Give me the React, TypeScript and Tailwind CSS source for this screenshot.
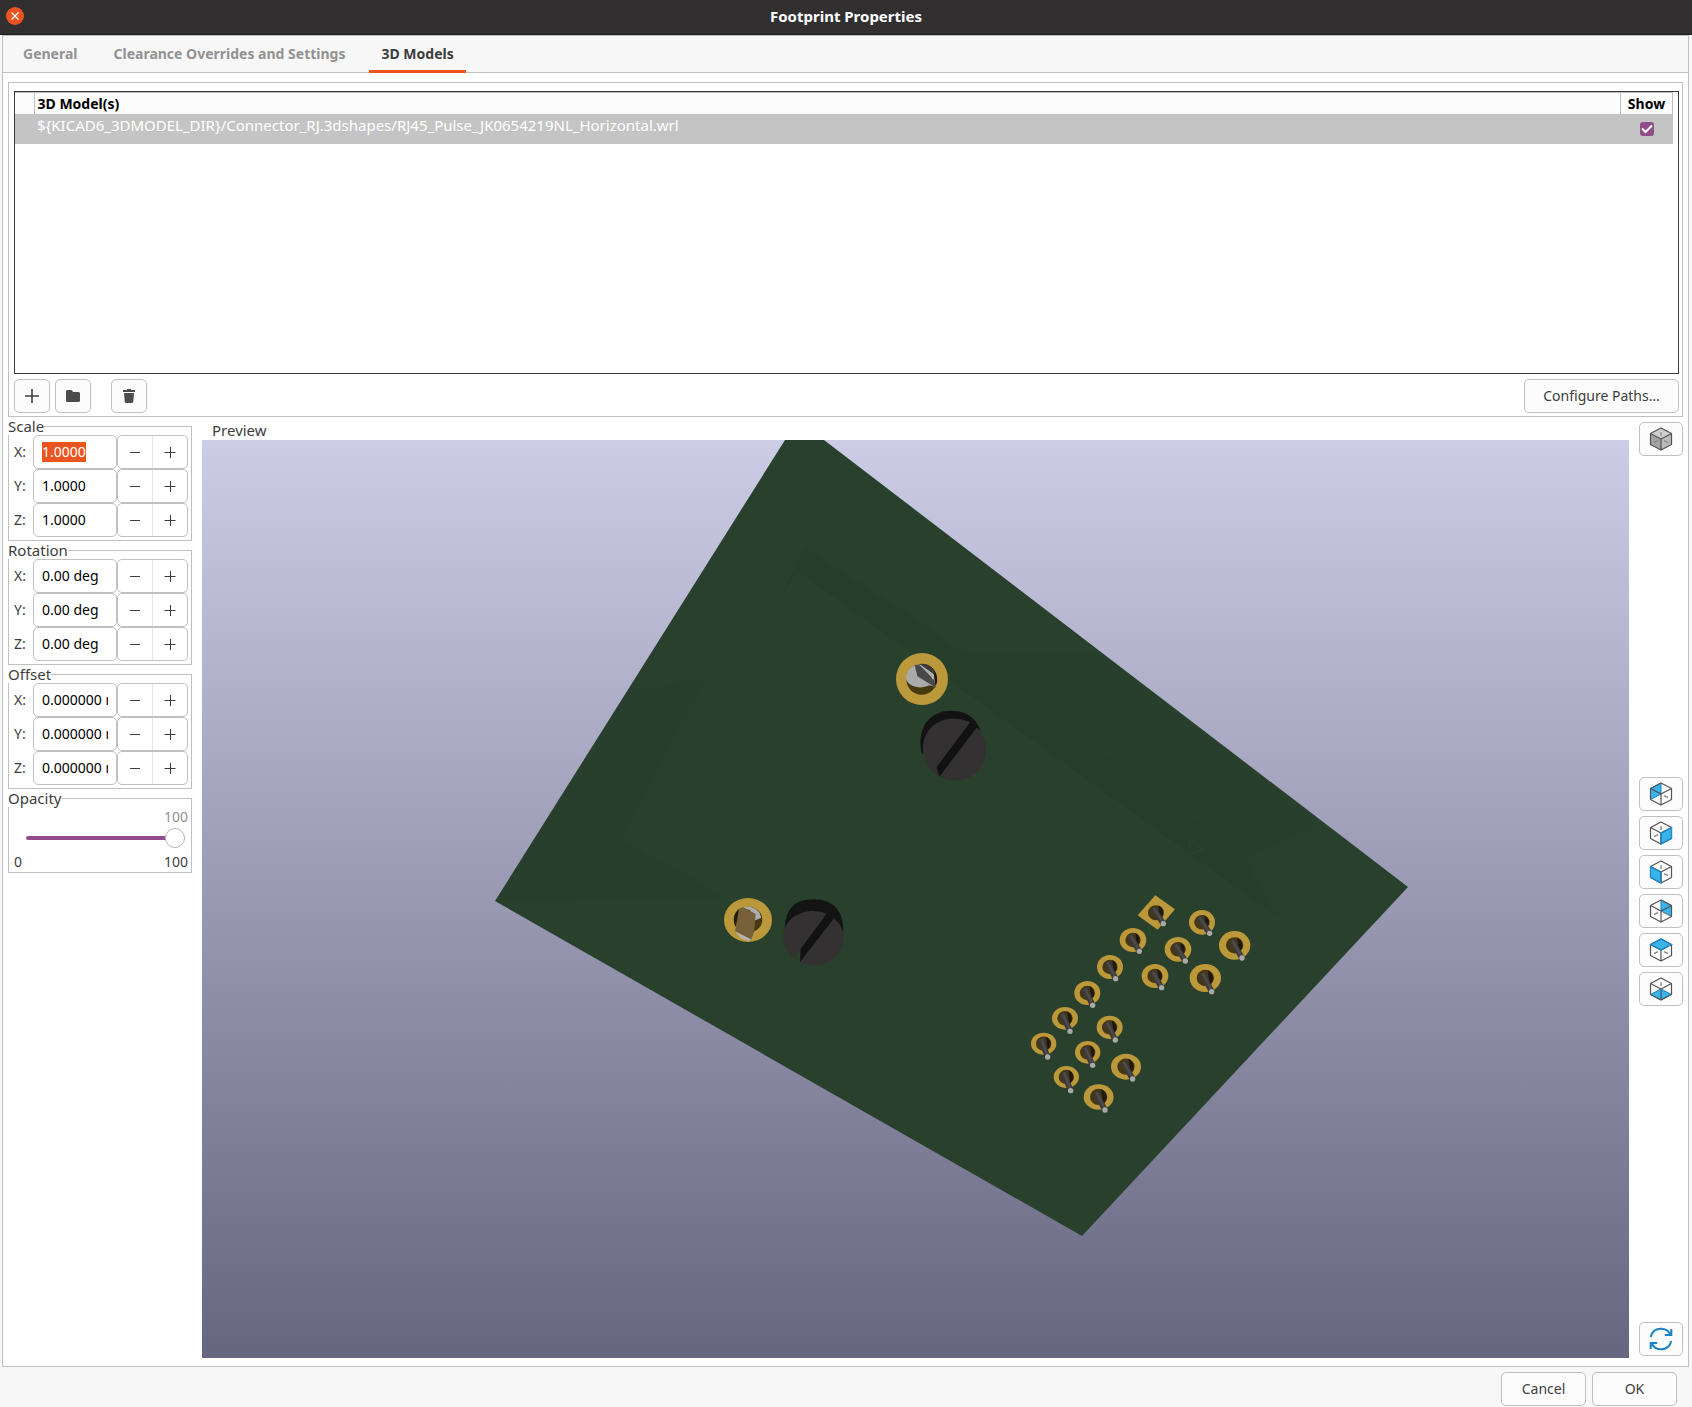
import React, { useEffect, useRef } from "react";

const BUTTON =
  "flex items-center justify-center rounded-[5px] border border-[#c0c0c0] bg-[#fcfcfc] text-[#3d3d3d]";

type CubeFace = "backLeft" | "right" | "left" | "backRight" | "top" | "bottom";

const FACES: Record<CubeFace, string> = {
  backLeft: "12,1 1.5,6.5 1.5,17.5 12,12",
  right: "12,12 22.5,6.5 22.5,17.5 12,23",
  left: "1.5,6.5 12,12 12,23 1.5,17.5",
  backRight: "12,1 22.5,6.5 22.5,17.5 12,12",
  top: "12,1 22.5,6.5 12,12 1.5,6.5",
  bottom: "12,12 22.5,17.5 12,23 1.5,17.5",
};

const VIEWS: { face: CubeFace; label: string }[] = [
  { face: "backLeft", label: "View left" },
  { face: "right", label: "View right" },
  { face: "left", label: "View front" },
  { face: "backRight", label: "View back" },
  { face: "top", label: "View top" },
  { face: "bottom", label: "View bottom" },
];

const CubeIcon = ({ face }: { face?: CubeFace }) => {
  const inFront = face === "left" || face === "right" || face === "top";

  return (
    <svg width="24" height="24" viewBox="0 0 24 24" fill="none">
      {!face && (
        <>
          <polygon points={FACES.top} fill="#d0d0d0" />
          <polygon points={FACES.left} fill="#a3a3a3" />
          <polygon points={FACES.right} fill="#bababa" />
        </>
      )}
      {face && <polygon points={FACES[face]} fill="#39b4ea" stroke="#1a81c4" />}
      <g stroke={face ? "#848484" : "#8c8c8c"} strokeWidth="1.3">
        {face !== "top" && face !== "backLeft" && face !== "backRight" && <path d="M12 5v4" />}
        {face !== "left" && face !== "backLeft" && face !== "bottom" && (
          <path d="M5 15.700l4-2.100" />
        )}
        {face !== "right" && face !== "bottom" && <path d="M19 15.700l-4-2.100" />}
      </g>
      <path
        d="M12 1l10.500 5.500v11L12 23 1.500 17.500v-11zM1.500 6.500L12 12l10.500-5.500M12 12v11"
        stroke="#545454"
        strokeWidth="1.2"
        strokeLinejoin="round"
      />
      {face && inFront && <polygon points={FACES[face]} stroke="#1f8fd0" strokeWidth="1.2" />}
    </svg>
  );
};

const StepIcon = ({ plus }: { plus?: boolean }) => (
  <svg width="12" height="12" viewBox="0 0 12 12" stroke="#3d3d3d" strokeWidth="1">
    <path d={plus ? "M.5 6.500h11M6.500 1v11" : "M1 6.500h10"} />
  </svg>
);

type AxisGroupProps = {
  title: string;
  value: string;
  focusFirst?: boolean;
};

const AxisGroup = ({ title, value, focusFirst }: AxisGroupProps) => {
  const first = useRef<HTMLInputElement>(null);

  useEffect(() => {
    if (focusFirst) {
      first.current?.focus();
      first.current?.select();
    }
  }, [focusFirst]);

  return (
    <fieldset className="border border-[#c0c0c0] pb-[3px]">
      <legend className="-ml-px text-[15px] leading-[18px]">{title}</legend>
      {["X", "Y", "Z"].map((axis, i) => {
        const id = `${title}-${axis}`;
        return (
          <div key={axis} className="flex h-[34px] items-stretch pr-[3px] pl-[5px]">
            <label htmlFor={id} className="flex w-[19px] items-center">
              {axis}:
            </label>
            <input
              id={id}
              ref={i === 0 ? first : undefined}
              defaultValue={value}
              className="w-[84px] rounded-[5px] border border-[#c0c0c0] bg-white px-2 text-black outline-none selection:bg-[#e95420] selection:text-white"
            />
            <div className="flex flex-1 rounded-[5px] border border-[#c0c0c0]">
              <button
                aria-label={`Decrease ${title} ${axis}`}
                className="flex flex-1 items-center justify-center border-r border-[#e4e4e4]"
              >
                <StepIcon />
              </button>
              <button
                aria-label={`Increase ${title} ${axis}`}
                className="flex flex-1 items-center justify-center"
              >
                <StepIcon plus />
              </button>
            </div>
          </div>
        );
      })}
    </fieldset>
  );
};

const OpacityGroup = () => (
  <fieldset className="border border-[#c0c0c0]">
    <legend className="-ml-px text-[15px] leading-[18px]">
      <label htmlFor="opacity">Opacity</label>
    </legend>
    <div className="flex h-[65px] flex-col pr-[3px] pl-[5px]">
      <output htmlFor="opacity" className="h-5 text-right leading-5 text-[#929292]">
        100
      </output>
      <input
        id="opacity"
        type="range"
        min="0"
        max="100"
        defaultValue="100"
        className="mr-[3px] ml-3 h-[22px] appearance-none bg-transparent [&::-webkit-slider-runnable-track]:h-1 [&::-webkit-slider-runnable-track]:rounded-full [&::-webkit-slider-runnable-track]:bg-[#924d8b] [&::-webkit-slider-thumb]:-mt-2 [&::-webkit-slider-thumb]:size-5 [&::-webkit-slider-thumb]:appearance-none [&::-webkit-slider-thumb]:rounded-full [&::-webkit-slider-thumb]:border [&::-webkit-slider-thumb]:border-[#b5b5b5] [&::-webkit-slider-thumb]:bg-white"
      />
      <div className="flex justify-between pt-1">
        <span>0</span>
        <span>100</span>
      </div>
    </div>
  </fieldset>
);

// cx, cy, rx, ry of the pad, then the tip of the pin
const PADS = [
  [576, 127, 39, 37, 599, 160],
  [674, 196, 47, 43, 696, 234],
  [369, 180, 40, 36, 388, 214],
  [504, 208, 40, 37, 526, 243],
  [300, 261, 39, 36, 317, 296],
  [435, 288, 40, 36, 455, 323],
  [586, 294, 47, 42, 605, 335],
  [232, 339, 39, 36, 248, 376],
  [165, 415, 39, 34, 180, 454],
  [299, 442, 39, 35, 316, 480],
  [101, 491, 38, 33, 113, 531],
  [233, 517, 38, 34, 248, 556],
  [348, 560, 45, 39, 368, 597],
  [169, 591, 38, 33, 182, 632],
  [266, 651, 45, 38, 285, 690],
];

type PinProps = { cx: number; cy: number; r: number; tx: number; ty: number };

const Pin = ({ cx, cy, r, tx, ty }: PinProps) => (
  <>
    <ellipse cx={cx} cy={cy} rx={r} ry={r * 0.94} fill="#463714" />
    <path
      d={`M${cx + r * 0.3} ${cy - r * 0.9}A${r} ${r} 0 0 1 ${cx + r * 0.5} ${cy + r * 0.8}z`}
      fill="#1f190c"
    />
    <path d={`M${cx - 9} ${cy - 14}L${tx} ${ty}`} stroke="#3c3a3a" strokeWidth="17" />
    <path d={`M${cx - 7} ${cy - 14}L${tx + 1} ${ty}`} stroke="#4d4b4b" strokeWidth="7" />
    <circle cx={tx} cy={ty} r="8" fill="#aaa9a9" />
  </>
);

const BoardPreview = () => (
  <svg
    className="absolute inset-0 size-full"
    viewBox="202 440 1427 918"
    preserveAspectRatio="xMidYMid slice"
    role="img"
    aria-label="3D preview of the board"
  >
    <polygon points="785,440 824,440 1408,887 1082,1236 495,901" fill="#29412c" />
    <path
      d="M940 653H1098L1320 824 1240 860zM628 692L705 678 622 838 725 899 498 900z"
      fill="#293f2f"
      opacity="0.7"
    />
    <path
      d="M805 548L916 619 1244 855 1277 918 798 573 778 600z"
      fill="#273e2a"
      opacity="0.8"
    />
    <path d="M798 573L1277 918 1130 1085 624 839z" fill="none" stroke="#2c4430" strokeWidth="1" />
    <path d="M1189 839l14 10-12 5z" fill="none" stroke="#2c4430" />

    {/* mounting posts */}
    <g transform="translate(880 630) scale(.3333)">
      <circle cx="126" cy="147" r="78" fill="#bb993a" />
      <circle cx="125" cy="148" r="46" fill="#46380f" />
      <path d="M125 102A46 46 0 0 1 168 166L140 130z" fill="#1d180c" />
      <path d="M106 105C84 114 75 135 79 151C90 171 120 179 148 166L166 170 160 120 125 102z" fill="#aaaaaa" />
      <path d="M104 105L112 139 168 173 162 150 120 106z" fill="#484848" />
      <path d="M116 102Q150 96 164 126L162 134z" fill="#3b3b3b" />
      <path d="M120 105L158 132v15" fill="none" stroke="#c2c2c2" strokeWidth="3" />
      <path d="M126 372C118 340 120 310 134 284C155 251 190 238 225 243C265 245 288 268 300 298L280 330z" fill="#131313" />
      <path d="M222 266A93 93 0 1 1 178 439L160 428C132 400 124 363 131 334C140 294 178 264 222 266z" fill="#343132" />
      <path d="M271 276L170 411 178 440 291 292 285 272z" fill="#111111" />
    </g>
    <g transform="translate(700 870) scale(.3333)">
      <ellipse cx="144" cy="150" rx="72" ry="66" fill="#bb993a" />
      <ellipse cx="144" cy="149" rx="43" ry="39" fill="#463710" />
      <path d="M102 151Q102 124 122 114L112 175Q102 165 102 151z" fill="#241c0a" />
      <path d="M119 115Q154 102 178 127L184 143 163 152 150 120z" fill="#aeacac" />
      <path d="M117 118L129 111 167 132 163 184 153 211 139 211 105 184z" fill="#756039" />
      <path d="M105 184L153 208 148 214 125 206z" fill="#b6b3b1" />
      <path d="M254 200C250 120 280 88 341 88C400 88 435 123 429 195z" fill="#141414" />
      <path d="M380 131L400 145C424 161 432 187 431 205C428 254 393 286 343 286Q318 286 300 276L282 263C258 244 250 222 250 200C250 155 290 123 341 123Q362 123 380 131z" fill="#343132" />
      <path d="M380 131L300 239V276L401 146z" fill="#111111" />
      <path d="M282 263L302 236 300 276z" fill="#29412c" />
    </g>

    {/* signal pins */}
    <g transform="translate(1010 880) scale(.3333)">
      <polygon points="436,46 495,88 443,149 383,106" fill="#bb993a" />
      <Pin cx={438} cy={98} r={24} tx={460} ty={131} />
      {PADS.map(([cx, cy, rx, ry, tx, ty]) => (
        <g key={`${cx}-${cy}`}>
          <ellipse cx={cx} cy={cy} rx={rx} ry={ry} fill="#bb993a" />
          <Pin cx={cx} cy={cy} r={rx > 42 ? 26 : 23} tx={tx} ty={ty} />
        </g>
      ))}
    </g>
  </svg>
);

const ModelTable = () => (
  <div className="h-[283px] border border-[#3a3a3a] bg-white pr-[5px]">
    <table className="w-full table-fixed border-collapse text-left">
      <thead>
        <tr className="h-[21px] border-t border-[#c0c0c0] bg-[#fcfcfc] leading-[18px] text-black">
          <th className="w-[19px] border-r border-[#c0c0c0] p-0" aria-label="Row" />
          <th className="border-r border-[#c0c0c0] pt-0.5 pr-0 pb-0 pl-[3px] font-bold">
            3D Model(s)
          </th>
          <th className="w-[52px] border-r border-[#c0c0c0] px-0 pt-0.5 pb-0 text-center font-bold">
            Show
          </th>
        </tr>
      </thead>
      <tbody>
        <tr className="h-[30px] bg-[#c4c4c4] text-white">
          <td className="p-0" />
          <td className="py-0 pr-0 pl-[3px] align-top text-[15px] leading-[22px]">
            {"${KICAD6_3DMODEL_DIR}/Connector_RJ.3dshapes/RJ45_Pulse_JK0654219NL_Horizontal.wrl"}
          </td>
          <td className="p-0">
            <label className="mx-auto grid size-[14px]">
              <input
                type="checkbox"
                defaultChecked
                aria-label="Show model"
                className="col-start-1 row-start-1 size-[14px] appearance-none rounded-[3px] bg-[#924d8b]"
              />
              <svg
                className="pointer-events-none col-start-1 row-start-1"
                viewBox="0 0 14 14"
                fill="none"
                stroke="white"
                strokeWidth="2"
              >
                <path d="M2 6.500L5.500 10 12 3.500" />
              </svg>
            </label>
          </td>
        </tr>
      </tbody>
    </table>
  </div>
);

const App = () => (
  <div className="flex min-h-screen flex-col bg-[#f7f7f7] font-['Noto_Sans','Open_Sans',sans-serif] text-[14px] leading-5 text-[#3d3d3d]">
    <header className="grid h-[35px] grid-cols-[1fr_auto_1fr] items-center border-b border-[#1c1c1c] bg-[#322f30] px-1.5 pb-0.5">
      <button
        aria-label="Close"
        className="flex size-[18px] items-center justify-center rounded-full bg-[#e95420]"
      >
        <svg width="8" height="8" viewBox="0 0 8 8" stroke="white" strokeWidth="1.3">
          <path d="M.5.5l7 7M7.500.5l-7 7" />
        </svg>
      </button>
      <h1 className="text-[15px] font-bold text-white">Footprint Properties</h1>
    </header>

    <main className="mr-[3px] ml-[2px] flex flex-1 flex-col border border-[#c0c0c0] bg-white">
      <div role="tablist" className="flex h-[37px] gap-3 border-b border-[#c0c0c0] bg-[#f7f7f7] pl-2 font-bold">
        <button role="tab" aria-selected="false" className="px-3 text-[#929292]">
          General
        </button>
        <button role="tab" aria-selected="false" className="px-3 text-[#929292]">
          Clearance Overrides and Settings
        </button>
        <button
          role="tab"
          aria-selected="true"
          className="-mb-px border-b-[3px] border-[#e95420] px-3 pt-0.5"
        >
          3D Models
        </button>
      </div>

      <div className="flex flex-1 flex-col px-[5px] pt-[9px] pb-2">
        <section className="border border-[#c0c0c0] pt-2 pr-[3px] pb-[3px] pl-[5px]">
          <ModelTable />
          <div className="mt-[5px] flex h-[34px]">
            <button aria-label="Add model" className={`${BUTTON} w-9`}>
              <svg width="14" height="14" viewBox="0 0 14 14" stroke="#3d3d3d" strokeWidth="1.6">
                <path d="M0 7h14M7 0v14" />
              </svg>
            </button>
            <button aria-label="Browse models" className={`${BUTTON} ml-[5px] w-9`}>
              <svg width="16" height="14" viewBox="0 0 16 14" fill="#4c4c4c">
                <path d="M1 2.500Q1 1 2.500 1H6q1 0 1.500 1l.5 1h5.500Q15 3 15 4.500v7q0 1.500-1.500 1.500h-11Q1 13 1 11.500z" />
              </svg>
            </button>
            <button aria-label="Remove model" className={`${BUTTON} ml-5 w-9`}>
              <svg width="14" height="16" viewBox="0 0 14 16" fill="#4c4c4c">
                <path d="M1 2h4V1h4v1h4v2H1zM2 5h10l-.7 8.500Q11.200 15 9.700 15H4.300Q2.800 15 2.700 13.500z" />
              </svg>
            </button>
            <button className={`${BUTTON} ml-auto w-[155px]`}>Configure Paths…</button>
          </div>
        </section>

        <div className="flex flex-1 gap-2.5">
          <aside className="w-[184px] shrink-0">
            <AxisGroup title="Scale" value="1.0000" focusFirst />
            <AxisGroup title="Rotation" value="0.00 deg" />
            <AxisGroup title="Offset" value="0.000000 mm" />
            <OpacityGroup />
          </aside>

          <section className="flex min-w-0 flex-1 flex-col">
            <h2 className="h-[23px] pt-1 pl-2.5 text-[15px] leading-[18px]">Preview</h2>
            <div className="relative flex-1 overflow-hidden bg-linear-to-b/srgb from-[#cccce6] to-[#666680]">
              <BoardPreview />
            </div>
          </section>

          <aside className="flex w-11 shrink-0 flex-col justify-between pt-[5px] pb-[2px]">
            <button aria-label="Toggle orthographic projection" className={`${BUTTON} h-[34px]`}>
              <CubeIcon />
            </button>
            <div className="mt-[5px] flex flex-col gap-[5px]">
              {VIEWS.map((view) => (
                <button key={view.face} aria-label={view.label} className={`${BUTTON} h-[34px]`}>
                  <CubeIcon face={view.face} />
                </button>
              ))}
            </div>
            <button aria-label="Reload board" className={`${BUTTON} h-[34px]`}>
              <svg width="24" height="24" viewBox="0 0 24 24" fill="none" stroke="#1a81c4" strokeWidth="2">
                <path d="M1.700 10C3 4.500 7 1.800 12 1.800c4 0 7.500 2 9.300 5.500M22.300 2v6h-6.500M22.300 14C21 19.500 17 22.200 12 22.200c-4 0-7.500-2-9.300-5.500M1.700 22v-6h6.500" />
              </svg>
            </button>
          </aside>
        </div>
      </div>
    </main>

    <footer className="flex justify-end gap-1.5 pt-[5px] pr-[15px] pb-px">
      <button className={`${BUTTON} h-[34px] w-[85px]`}>Cancel</button>
      <button className={`${BUTTON} h-[34px] w-[85px]`}>OK</button>
    </footer>
  </div>
);

export default App;
